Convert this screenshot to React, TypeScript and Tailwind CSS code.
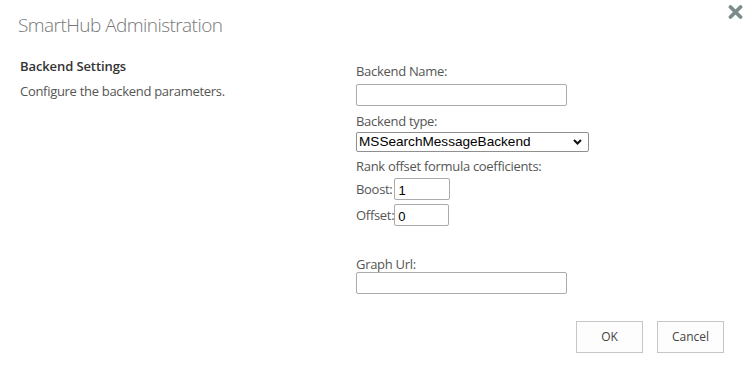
import React from 'react';

const ui = { fontFamily: '"Open Sans", "Noto Sans", sans-serif' };
const arial = { fontFamily: '"Liberation Sans", Arial, sans-serif' };

function Field({ children, className = '' }: { children?: React.ReactNode; className?: string }) {
  return (
    <div
      className={`border border-[#ababab] rounded-[2px] bg-white flex items-center px-[3px] text-[13px] text-black tracking-normal ${className}`}
      style={arial}
    >
      {children}
    </div>
  );
}

export default function App() {
  return (
    <div className="w-[750px] h-[368px] bg-white overflow-hidden text-[#444]" style={ui}>
      {/* Header */}
      <div className="flex items-start justify-between">
        <h1 className="pl-[18px] pt-[11px] text-[19px] leading-[28px] font-light tracking-[-0.55px] text-[#777]">
          SmartHub Administration
        </h1>
        <button className="mt-[5px] mr-[7px] w-[16px] h-[14px] flex items-center justify-center" title="Close">
          <svg width="15" height="14" viewBox="0 0 15 14">
            <path d="M2.5 2 L12.5 12 M12.5 2 L2.5 12" stroke="#7c8c8b" strokeWidth="3.8" strokeLinecap="round" />
          </svg>
        </button>
      </div>

      {/* Body */}
      <div className="flex mt-[18px]">
        <div className="w-[356px] pl-[20px] tracking-[-0.3px]">
          <div className="text-[13px] leading-[18px] font-semibold text-[#333] tracking-[-0.1px]">Backend Settings</div>
          <div className="mt-[7px] text-[13px] leading-[18px] text-[#555]">Configure the backend parameters.</div>
        </div>

        <div className="pt-[5px] text-[13px] leading-[18px] text-[#555] tracking-[-0.3px]">
          <div>Backend Name:</div>
          <Field className="mt-[4px] w-[211px] h-[22px]" />

          <div className="mt-[6px]">Backend type:</div>
          <div
            className="mt-[2px] w-[233px] h-[20px] border border-[#8f8f8f] rounded-[2px] flex items-center justify-between pl-[2px] pr-[6px] text-[13.6px] text-black tracking-normal"
            style={arial}
          >
            <span>MSSearchMessageBackend</span>
            <svg width="9" height="6" viewBox="0 0 9 6">
              <path d="M1 1 L4.5 4.5 L8 1" fill="none" stroke="#111" strokeWidth="2" />
            </svg>
          </div>

          <div className="mt-[5px]">Rank offset formula coefficients:</div>
          <div className="mt-[3px] flex items-center">
            <span>Boost:</span>
            <Field className="ml-[2px] w-[56px] h-[22px] pt-[3px]">1</Field>
          </div>
          <div className="mt-[4px] flex items-center">
            <span>Offset:</span>
            <Field className="w-[55px] h-[22px] pt-[3px]">0</Field>
          </div>

          <div className="mt-[30px] leading-[16px]">Graph Url:</div>
          <Field className="w-[211px] h-[22px]" />
        </div>
      </div>

      {/* Footer */}
      <div className="flex justify-end gap-[14px] mt-[27px] pr-[26px]">
        <button className="w-[67px] h-[32px] border border-[#c6c6c6] bg-[#fdfdfd] text-[12px] text-[#444]">OK</button>
        <button className="w-[67px] h-[32px] border border-[#c6c6c6] bg-[#fdfdfd] text-[12px] text-[#444]">Cancel</button>
      </div>
    </div>
  );
}
